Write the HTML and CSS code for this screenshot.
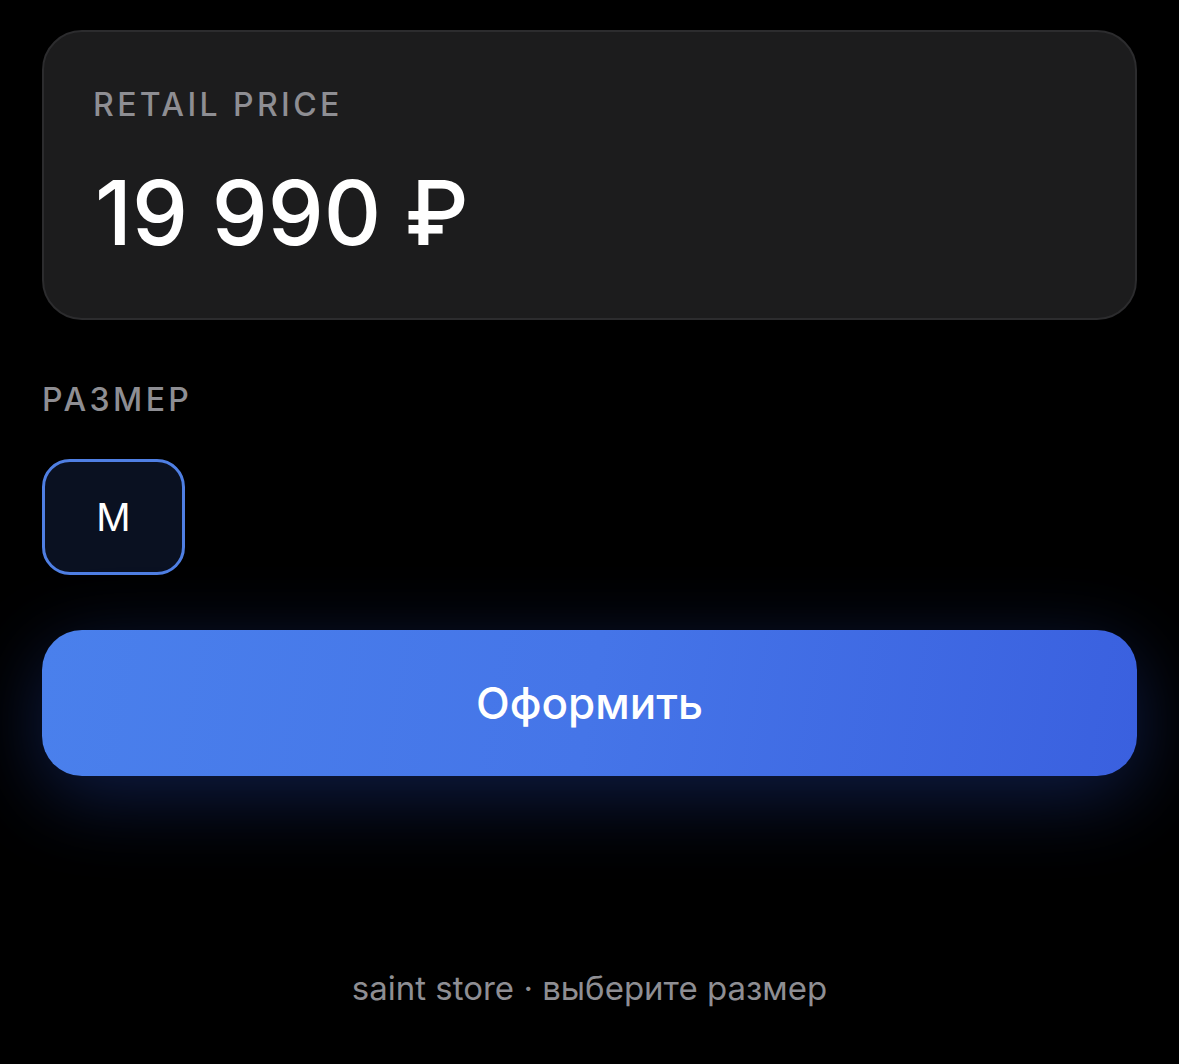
FILE: index.html
```html
<!DOCTYPE html>
<html lang="ru">
<head>
    <meta charset="utf-8">
    <title>saint store</title>
    <link rel="stylesheet" href="styles.css">
</head>
<body>
    <div class="page">
        <!-- карточка цены -->
        <div class="price-card">
            <div class="price-label">RETAIL PRICE</div>
            <div class="price-value">19 990 ₽</div>
        </div>

        <!-- выбор размера -->
        <div class="size-block">
            <div class="size-label">РАЗМЕР</div>
            <div class="size-list">
                <button class="size-btn selected">M</button>
            </div>
        </div>

        <button class="order-btn">Оформить</button>

        <div class="footer-note">saint store · выберите размер</div>
    </div>
</body>
</html>
```

FILE: styles.css
```css
html, body {
    margin: 0;
    background: #000;
}

body {
    font-family: Inter, "Noto Sans", sans-serif;
    color: #fff;
}

.page {
    padding: 30px 42px 0;
    display: flex;
    flex-direction: column;
    min-height: 1034px;
    box-sizing: border-box;
}

/* карточка цены */
.price-card {
    background: #1c1c1d;
    border: 2px solid #2c2c2e;
    border-radius: 40px;
    height: 290px;
    box-sizing: border-box;
    padding: 53px 49px 0;
}

.price-label {
    font-size: 32px;
    line-height: 40px;
    font-weight: 500;
    letter-spacing: 3.4px;
    color: #8e8e93;
}

.price-value {
    margin-top: 38px;
    padding-left: 2px;
    font-size: 89px;
    line-height: 100px;
    font-weight: 500;
    letter-spacing: 0;
    color: #fff;
}

/* размеры */
.size-block {
    margin-top: 60px;
}

.size-label {
    font-size: 32px;
    line-height: 40px;
    font-weight: 500;
    letter-spacing: 3.4px;
    color: #8e8e93;
}

.size-list {
    display: flex;
    gap: 16px;
    margin-top: 39px;
}

.size-btn {
    width: 143px;
    height: 116px;
    border-radius: 28px;
    border: 3px solid #4f7fe3;
    background: #0a1121;
    color: #fff;
    font-family: inherit;
    font-size: 38px;
    font-weight: 400;
    padding: 0;
}

/* кнопка оформления */
.order-btn {
    margin-top: 55px;
    height: 146px;
    border: none;
    border-radius: 40px;
    background: linear-gradient(100deg, #4a80ec 0%, #4575e8 50%, #3a60df 100%);
    box-shadow: 0 20px 80px rgba(48, 90, 220, 0.32);
    color: #fff;
    font-family: inherit;
    font-size: 44px;
    font-weight: 500;
    padding: 0;
}

.footer-note {
    margin-top: 192px;
    text-align: center;
    font-size: 33px;
    line-height: 40px;
    color: #8e8e93;
}
```
